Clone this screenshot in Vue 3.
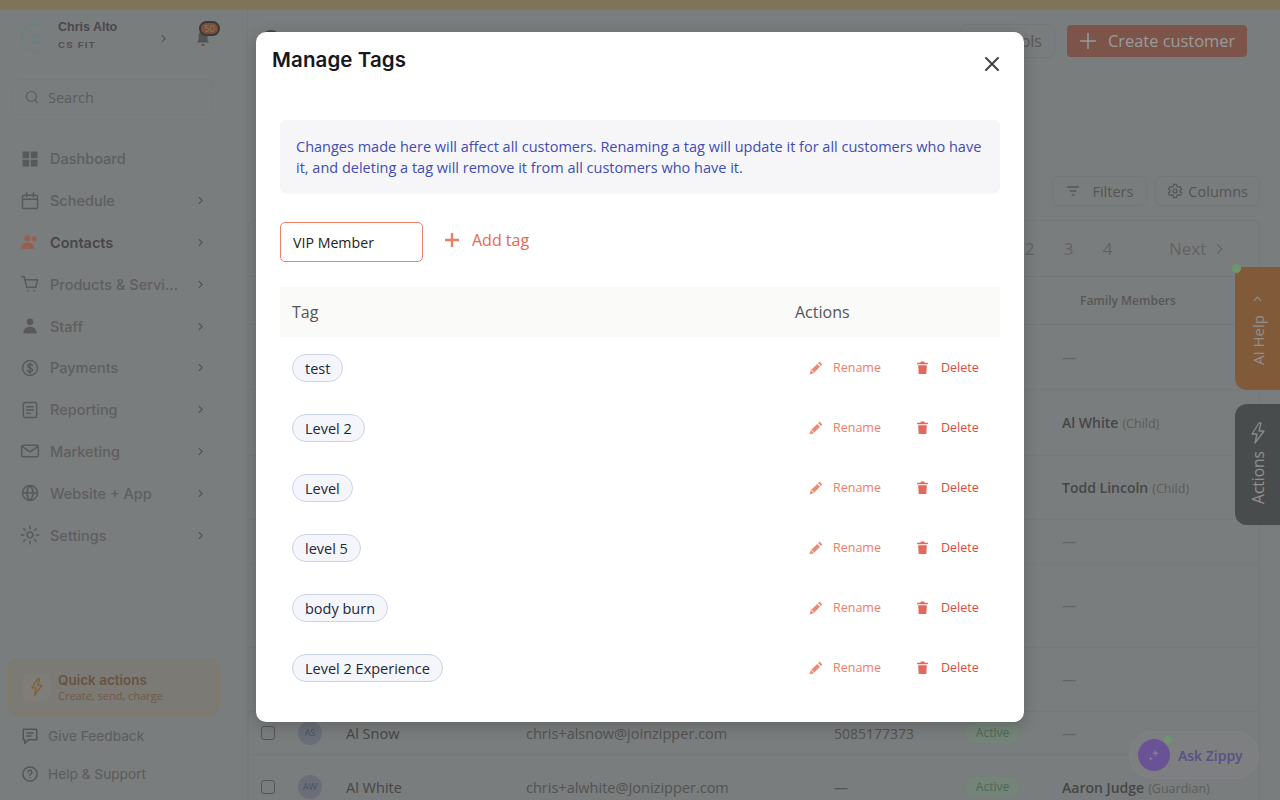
<script setup>
const navItems = [
  { label: 'Dashboard', icon: 'M3 3h8v8H3zM13 3h8v8h-8zM3 13h8v8H3zM13 13h8v8h-8z', solid: true },
  { label: 'Schedule', icon: 'M5 5h14a2 2 0 0 1 2 2v13a1 1 0 0 1-1 1H4a1 1 0 0 1-1-1V7a2 2 0 0 1 2-2zM3 10h18M8 2.5V7M16 2.5V7', arrow: true },
  { label: 'Contacts', icon: 'M9 4a3.6 3.6 0 1 1 0 7.2A3.6 3.6 0 0 1 9 4zM17 5a3 3 0 1 1 0 6 3 3 0 0 1 0-6zM1 20c0-5 3.5-7.5 8-7.5s8 2.5 8 7.5z', solid: true, active: true, arrow: true },
  { label: 'Products & Servi...', icon: 'M2 3h3l3 13h11l2-9H6.2M9 20.5h.5M17 20.5h.5', arrow: true },
  { label: 'Staff', icon: 'M12 3a4 4 0 1 1 0 8 4 4 0 0 1 0-8zM4 21c0-5 3.5-8 8-8s8 3 8 8z', solid: true, arrow: true },
  { label: 'Payments', icon: 'M12 3a9 9 0 1 1 0 18 9 9 0 0 1 0-18zM15 9c-.5-1-1.500-1.500-3-1.500-2 0-3 1-3 2.200 0 3 6 1.500 6 4.500 0 1.300-1 2.300-3 2.300-1.500 0-2.700-.6-3.200-1.700M12 6v12', arrow: true },
  { label: 'Reporting', icon: 'M6 3h12a2 2 0 0 1 2 2v14a2 2 0 0 1-2 2H6a2 2 0 0 1-2-2V5a2 2 0 0 1 2-2zM8 8h8M8 12h8M8 16h4', arrow: true },
  { label: 'Marketing', icon: 'M4 5h16a2 2 0 0 1 2 2v10a2 2 0 0 1-2 2H4a2 2 0 0 1-2-2V7a2 2 0 0 1 2-2zM2.500 6.500 12 13l9.500-6.500', arrow: true },
  { label: 'Website + App', icon: 'M12 3a9 9 0 1 1 0 18 9 9 0 0 1 0-18zM3 12h18M12 3c-5 5-5 13 0 18M12 3c5 5 5 13 0 18', arrow: true },
  { label: 'Settings', icon: 'M12 8.500a3.500 3.500 0 1 1 0 7 3.500 3.500 0 0 1 0-7zM12 1.500v3M12 19.500v3M1.500 12h3M19.500 12h3M4.500 4.500l2 2M17.500 17.500l2 2M4.500 19.500l2-2M17.500 6.500l2-2', arrow: true }
];

const rows = [
  { height: 65, family: '—' },
  { height: 66, family: 'Al White', relation: '(Child)' },
  { height: 64, family: 'Todd Lincoln', relation: '(Child)' },
  { height: 44, family: '—' },
  { height: 84, family: '—' },
  { height: 64, family: '—' },
  { height: 43, initials: 'AS', name: 'Al Snow', email: 'chris+alsnow@joinzipper.com', phone: '5085177373', family: '—' },
  { height: 65, initials: 'AW', name: 'Al White', email: 'chris+alwhite@Jonizipper.com', phone: '—', family: 'Aaron Judge', relation: '(Guardian)' }
];

const tags = ['test', 'Level 2', 'Level', 'level 5', 'body burn', 'Level 2 Experience'];
</script>

<template>
  <div class="page">
    <div class="promo-bar"></div>
    <div class="shell">
      <aside class="sidebar">
        <div class="account">
          <svg class="logo" viewBox="0 0 32 32" fill="none" stroke="#a9d8d8" stroke-width="1.300">
            <path d="M22 2.500A14.500 14.500 0 1 0 22 29.500" />
            <path d="M26 13h-8a4 4 0 0 0 0 8h9" />
          </svg>
          <div class="account-text">
            <div class="account-name">Chris Alto</div>
            <div class="account-org">CS FIT</div>
          </div>
          <svg class="chev account-chev" viewBox="0 0 6 10" fill="none" stroke="currentColor" stroke-width="1.400"><path d="m1 1 4 4-4 4" /></svg>
          <div class="bell">
            <svg viewBox="0 0 24 24" width="18" height="18" fill="#8a8a8a">
              <path d="M12 3c4 0 6 3 6 7v5l2 3H4l2-3v-5c0-4 2-7 6-7zM9.500 20h5a2.500 2.500 0 0 1-5 0z" />
            </svg>
            <span class="bell-count">50</span>
          </div>
        </div>
        <div class="search">
          <svg viewBox="0 0 24 24" width="14" height="14" fill="none" stroke="#999" stroke-width="2">
            <circle cx="11" cy="11" r="8.500" /><path d="m17 17 5 5" />
          </svg>
          <span>Search</span>
        </div>
        <nav class="nav">
          <div v-for="item in navItems" :key="item.label" class="nav-item" :class="{ active: item.active }">
            <svg class="nav-icon" viewBox="0 0 24 24" :fill="item.solid ? 'currentColor' : 'none'" :stroke="item.solid ? 'none' : 'currentColor'" stroke-width="1.800" stroke-linecap="round" stroke-linejoin="round">
              <path :d="item.icon" />
            </svg>
            <span class="nav-label">{{ item.label }}</span>
            <svg v-if="item.arrow" class="chev" viewBox="0 0 6 10" fill="none" stroke="currentColor" stroke-width="1.400"><path d="m1 1 4 4-4 4" /></svg>
          </div>
        </nav>
        <div class="sidebar-foot">
          <div class="quick">
            <div class="quick-icon">
              <svg viewBox="0 0 24 24" width="20" height="20" fill="none" stroke="#e0a050" stroke-width="1.700" stroke-linejoin="round">
                <path d="M13 2 6 13h5l-2 9 9-12h-5l2-8z" />
              </svg>
            </div>
            <div>
              <div class="quick-title">Quick actions</div>
              <div class="quick-sub">Create, send, charge</div>
            </div>
          </div>
          <div class="foot-link">
            <svg viewBox="0 0 24 24" width="18" height="18" fill="none" stroke="#8e8e8e" stroke-width="2" stroke-linejoin="round">
              <path d="M3 3h18v14H10l-5 5v-5H3zM7 8h10M7 12h7" />
            </svg>
            <span>Give Feedback</span>
          </div>
          <div class="foot-link">
            <svg viewBox="0 0 24 24" width="18" height="18" fill="none" stroke="#8e8e8e" stroke-width="2" stroke-linecap="round">
              <circle cx="12" cy="12" r="9.500" /><path d="M9.500 9.500a2.500 2.500 0 1 1 3.500 2.300c-.7.3-1 .8-1 1.700M12 17h.01" />
            </svg>
            <span>Help &amp; Support</span>
          </div>
        </div>
      </aside>

      <main class="main">
        <div class="main-head">
          <span class="title-icon"></span>
          <button class="tools-btn">Tools</button>
          <button class="create-btn">
            <svg viewBox="0 0 16 16" width="16" height="16" fill="none" stroke="#fff" stroke-width="1.500"><path d="M8 0v16M0 8h16" /></svg>
            Create customer
          </button>
        </div>
        <div class="tabs-line"></div>
        <div class="toolbar">
          <button class="tool-btn">
            <svg viewBox="0 0 24 24" width="16" height="16" fill="none" stroke="#8e8e8e" stroke-width="2"><path d="M3 6h18M7 12h10M10 18h4" /></svg>
            <span class="filters-label">Filters</span>
          </button>
          <button class="tool-btn">
            <svg viewBox="0 0 24 24" width="16" height="16" fill="none" stroke="#8e8e8e" stroke-width="1.800"><circle cx="12" cy="12" r="3" /><path d="m10 2-.6 3-2.600 1.500-3-1L2 9l2.300 2v2L2 15l1.800 3.500 3-1L9.400 19l.6 3h4l.6-3 2.600-1.500 3 1L22 15l-2.300-2v-2L22 9l-1.800-3.500-3 1L14.600 5 14 2z" /></svg>
            Columns
          </button>
        </div>
        <div class="table-card">
          <div class="pager">
            <span class="pg">2</span><span class="pg">3</span><span class="pg">4</span>
            <span class="pg-next">Next
              <svg viewBox="0 0 6 10" width="7" height="12" fill="none" stroke="currentColor" stroke-width="1"><path d="m1 1 4 4-4 4" /></svg>
            </span>
          </div>
          <div class="thead"><span class="family-head">Family Members</span></div>
          <div v-for="(row, i) in rows" :key="i" class="trow" :style="{ height: row.height + 'px' }">
            <template v-if="row.name">
              <span class="check"></span>
              <span class="avatar">{{ row.initials }}</span>
              <span class="cell-name">{{ row.name }}</span>
              <span class="cell-email">{{ row.email }}</span>
              <span class="cell-phone">{{ row.phone }}</span>
              <span class="cell-status">Active</span>
            </template>
            <span class="cell-family">
              <span :class="{ dash: row.family === '—' }">{{ row.family }}</span>
              <span v-if="row.relation" class="relation">{{ row.relation }}</span>
            </span>
          </div>
        </div>
      </main>
    </div>

    <div class="side-tab help-tab">
      <svg viewBox="0 0 10 6" width="9" height="6" fill="none" stroke="#eee" stroke-width="1.300"><path d="m1 5 4-4 4 4" /></svg>
      <span class="tab-text">AI Help</span>
    </div>
    <span class="help-dot"></span>
    <div class="side-tab actions-tab">
      <svg viewBox="0 0 24 24" width="24" height="24" fill="none" stroke="#e4e8e8" stroke-width="1.300" stroke-linejoin="round">
        <path d="M13 2 6 13h5l-2 9 9-12h-5l2-8z" />
      </svg>
      <span class="tab-text">Actions</span>
    </div>
    <div class="zippy">
      <span class="zippy-icon">
        <svg viewBox="0 0 24 24" width="16" height="16" fill="#d8cdf8"><path d="m14 4 1.500 4 4 1.500-4 1.500-1.500 4-1.500-4-4-1.500 4-1.500zM7 14l1 2.500 2.500 1L8 18.500 7 21l-1-2.500-2.500-1 2.500-1z" /></svg>
        <span class="zippy-dot"></span>
      </span>
      Ask Zippy
    </div>

    <div class="overlay">
      <section class="modal">
        <header class="modal-head">
          <h2>Manage Tags</h2>
          <svg class="close" viewBox="0 0 24 24" width="24" height="24" fill="none" stroke="#444" stroke-width="2" stroke-linecap="round">
            <path d="m6 6 12 12M18 6 6 18" />
          </svg>
        </header>
        <div class="modal-body">
          <p class="notice">Changes made here will affect all customers. Renaming a tag will update it for all customers who have it, and deleting a tag will remove it from all customers who have it.</p>
          <div class="add-row">
            <input class="tag-input" type="text" value="VIP Member">
            <button class="add-btn">
              <svg viewBox="0 0 16 16" width="16" height="16" fill="none" stroke="#ec7f66" stroke-width="2.400"><path d="M8 1v14M1 8h14" /></svg>
              Add tag
            </button>
          </div>
          <div class="tags-head">
            <span class="col-tag">Tag</span>
            <span class="col-actions">Actions</span>
          </div>
          <div v-for="tag in tags" :key="tag" class="tag-row">
            <span class="col-tag"><span class="pill">{{ tag }}</span></span>
            <span class="rename">
              <svg viewBox="0 0 24 24" width="14" height="14" fill="#f08a78">
                <path d="M18 1l5 5-2.500 2.500-5-5zM14 5l5 5L8 21 1 23l2-7z" />
                <path d="m4 15.500 5 5" stroke="#fff" stroke-width="1.500" />
              </svg>
              Rename
            </span>
            <span class="delete">
              <svg viewBox="0 0 24 24" width="13" height="13" fill="#e26a5c"><path d="M9 1h6l1 2h6v3H2V3h6zM4 8h16l-1 16H5z" /></svg>
              Delete
            </span>
          </div>
        </div>
      </section>
    </div>
  </div>
</template>

<style scoped>
.page {
  position: relative;
  width: 1280px;
  height: 800px;
  overflow: hidden;
  background: #cbd0d0;
  font-family: "Open Sans", sans-serif;
}
.promo-bar {
  height: 10px;
  background: #d4c093;
}
.shell {
  display: flex;
  height: 790px;
}
.sidebar {
  width: 248px;
  flex: none;
  display: flex;
  flex-direction: column;
  border-right: 1px solid #c4c8c8;
  box-sizing: border-box;
  font-family: Inter, sans-serif;
}
.account {
  display: flex;
  align-items: center;
  padding: 8px 0 0 19px;
  height: 40px;
}
.logo {
  width: 30px;
  height: 30px;
  flex: none;
}
.account-text {
  margin: 0 0 6px 9px;
  width: 101px;
}
.account-name {
  font-family: "Liberation Sans", sans-serif;
  font-size: 12.500px;
  font-weight: 700;
  color: #7b7b7b;
}
.account-org {
  font-family: "Liberation Sans", sans-serif;
  font-size: 9.500px;
  font-weight: 700;
  letter-spacing: 1.300px;
  color: #858585;
  margin-top: 5px;
}
.chev {
  width: 5px;
  height: 9px;
  flex: none;
  color: #8a8a8a;
}
.account-chev {
  margin: 0 28px 0 2px;
}
.bell {
  position: relative;
  height: 18px;
}
.bell-count {
  position: absolute;
  top: -8px;
  left: 5px;
  width: 17px;
  height: 11px;
  border: 2px solid #5f6262;
  border-radius: 8px;
  background: #d0845a;
  color: #d8c0b0;
  font-size: 9px;
  line-height: 11px;
  text-align: center;
}
.search {
  display: flex;
  align-items: center;
  gap: 9px;
  margin: 21px 34px 0 12px;
  height: 34px;
  padding-left: 12px;
  border: 1px solid #c8cccc;
  border-radius: 6px;
  font-family: "Open Sans", sans-serif;
  font-size: 14.500px;
  color: #999;
}
.nav {
  margin-top: 23px;
  padding-left: 20px;
}
.nav-item {
  display: flex;
  align-items: center;
  height: 41.800px;
  color: #949494;
}
.nav-item.active {
  color: #ff9f80;
}
.nav-icon {
  width: 20px;
  height: 20px;
  flex: none;
}
.nav-label {
  width: 139px;
  margin-left: 10px;
  font-size: 14.500px;
  font-weight: 500;
  color: #9e9e9e;
  white-space: nowrap;
}
.active .nav-label {
  font-weight: 600;
  color: #777;
}
.nav-item .chev {
  margin-left: 9px;
  color: #8a8a8a;
}
.sidebar-foot {
  margin-top: auto;
  padding: 0 0 7px 8px;
}
.quick {
  display: flex;
  align-items: center;
  gap: 8px;
  width: 211px;
  height: 56px;
  padding-left: 14px;
  box-sizing: border-box;
  margin-bottom: 2px;
  border: 1px solid #d9c9a6;
  border-radius: 8px;
  background: #cdcbc2;
}
.quick-icon {
  width: 27px;
  height: 27px;
  display: flex;
  align-items: center;
  justify-content: center;
  border-radius: 5px;
  background: #d0d0ca;
}
.quick-title {
  font-size: 13.500px;
  font-weight: 600;
  color: #b08a72;
}
.quick-sub {
  font-family: "Open Sans", sans-serif;
  font-size: 11px;
  color: #c09478;
}
.foot-link {
  display: flex;
  align-items: center;
  gap: 9px;
  height: 38px;
  padding-left: 13px;
  font-size: 13.700px;
  color: #9a9a9a;
}
.main {
  flex: 1;
  display: flex;
  flex-direction: column;
  min-width: 0;
}
.main-head {
  display: flex;
  align-items: center;
  gap: 12px;
  height: 31px;
  margin-top: 15px;
  padding: 0 33px 0 13px;
}
.title-icon {
  width: 20px;
  height: 22px;
  margin-right: auto;
  border-radius: 50%;
  background: #777;
}
.tools-btn {
  width: 95px;
  height: 34px;
  border: 1px solid #c4c8c8;
  border-radius: 8px;
  background: transparent;
  font: 16px "Open Sans", sans-serif;
  color: #929292;
  text-align: right;
  padding: 0 12px;
}
.create-btn {
  display: flex;
  align-items: center;
  gap: 12px;
  width: 180px;
  height: 32px;
  border: 0;
  border-radius: 4px;
  background: #d08c7a;
  font: 16.400px "Open Sans", sans-serif;
  color: #fff;
  padding: 0 0 0 13px;
}
.tabs-line {
  height: 1px;
  margin: 96px 20px 0 0;
  background: #c2c6c6;
}
.toolbar {
  display: flex;
  justify-content: flex-end;
  gap: 8px;
  margin-top: 24px;
  padding-right: 20px;
}
.tool-btn {
  display: flex;
  align-items: center;
  gap: 5px;
  height: 30px;
  padding: 0 12px;
  border: 1px solid #c4c8c8;
  border-radius: 6px;
  background: transparent;
  font: 14.500px "Open Sans", sans-serif;
  color: #8e8e8e;
}
.tool-btn:last-child {
  padding: 0 11px;
}
.filters-label {
  margin-left: 6px;
  margin-right: 1px;
}
.table-card {
  margin: 14px 20px 0 0;
  border: 1px solid #c4c8c8;
  border-bottom: 0;
  border-radius: 6px 6px 0 0;
}
.pager {
  display: flex;
  align-items: center;
  height: 55px;
  padding-left: 761px;
  font-size: 17px;
  color: #a4a4a4;
}
.pg {
  width: 39px;
  text-align: center;
}
.pg-next {
  display: flex;
  align-items: center;
  gap: 10px;
  margin-left: 42px;
}
.thead {
  height: 49px;
  display: flex;
  align-items: center;
  border-top: 1px solid #c2c6c6;
  border-bottom: 1px solid #c2c6c6;
  box-sizing: border-box;
  font-size: 12px;
  font-weight: 600;
  color: #929292;
}
.family-head {
  margin-left: 831px;
}
.trow {
  position: relative;
  display: flex;
  align-items: center;
  box-sizing: border-box;
  border-bottom: 1px solid #c6caca;
  font-size: 14.500px;
  color: #7d7d7d;
}
.check {
  width: 12px;
  height: 12px;
  margin-left: 12px;
  border: 1px solid #8e8e8e;
  border-radius: 3px;
}
.avatar {
  width: 24px;
  height: 24px;
  margin-left: 23px;
  border-radius: 50%;
  background: #b0b8c8;
  font-size: 9px;
  line-height: 24px;
  text-align: center;
  color: #7e8aa0;
}
.cell-name {
  width: 180px;
  margin-left: 24px;
  color: #757575;
}
.cell-email {
  width: 308px;
  color: #8a8a8a;
}
.cell-phone {
  width: 130px;
  font-size: 14px;
  color: #8a8a8a;
}
.cell-status {
  width: 57px;
  height: 22px;
  margin-right: 41px;
  border: 1px solid #bcd8c4;
  border-radius: 11px;
  background: #c4dcc8;
  font-size: 12px;
  line-height: 20px;
  text-align: center;
  color: #7eb08e;
  box-sizing: border-box;
}
.cell-family {
  position: absolute;
  left: 813px;
  white-space: nowrap;
  font-size: 14px;
  font-weight: 600;
  color: #757575;
}
.dash {
  font-weight: 400;
  color: #a8a8a8;
}
.relation {
  margin-left: 4px;
  font-size: 12.500px;
  font-weight: 400;
  color: #9a9a9a;
}
.side-tab {
  position: absolute;
  left: 1235px;
  width: 45px;
  display: flex;
  flex-direction: column;
  align-items: center;
  box-sizing: border-box;
  border-radius: 12px 0 0 12px;
  color: #eee;
}
.help-tab {
  top: 267px;
  height: 123px;
  background: #d8965f;
  padding-top: 29px;
  gap: 13px;
  border-top-left-radius: 8px;
  font-size: 15px;
}
.actions-tab {
  top: 404px;
  height: 121px;
  background: #7b7f7f;
  padding-top: 17px;
  gap: 6px;
  font-size: 15.500px;
}
.tab-text {
  writing-mode: vertical-rl;
  transform: rotate(180deg);
}
.help-dot {
  position: absolute;
  left: 1232px;
  top: 264px;
  width: 9px;
  height: 9px;
  border-radius: 50%;
  background: #b7fab7;
}
.zippy {
  position: absolute;
  left: 1129px;
  top: 731px;
  width: 130px;
  height: 48px;
  display: flex;
  align-items: center;
  gap: 8px;
  padding-left: 8px;
  box-sizing: border-box;
  border: 1px solid #d8d8ec;
  border-radius: 24px;
  background: #d2d4d8;
  font-size: 14px;
  font-weight: 600;
  color: #9684e3;
}
.zippy-icon {
  position: relative;
  width: 32px;
  height: 32px;
  display: flex;
  align-items: center;
  justify-content: center;
  border-radius: 50%;
  background: #b089fa;
}
.zippy-dot {
  position: absolute;
  top: -3px;
  right: -2px;
  width: 8px;
  height: 8px;
  border-radius: 50%;
  background: #b7fab7;
}
.overlay {
  position: absolute;
  inset: 0;
  display: flex;
  justify-content: center;
  align-items: flex-start;
  padding-top: 32px;
  background: rgba(0, 0, 0, .4);
}
.modal {
  width: 768px;
  height: 690px;
  border-radius: 10px;
  background: #fff;
  box-shadow: 0 4px 16px rgba(0, 0, 0, .2);
}
.modal-head {
  display: flex;
  justify-content: space-between;
  align-items: flex-start;
  height: 88px;
  padding: 14px 20px 0 16px;
  box-sizing: border-box;
}
.modal-head h2 {
  margin: 0;
  font-family: Inter, sans-serif;
  font-size: 20.500px;
  font-weight: 600;
  line-height: 28px;
  letter-spacing: .1px;
  color: #16181d;
}
.close {
  margin-top: 6px;
}
.modal-body {
  padding: 0 24px;
}
.notice {
  margin: 0;
  padding: 16px;
  height: 74px;
  box-sizing: border-box;
  border-radius: 6px;
  background: #f6f6f9;
  font-size: 14.500px;
  line-height: 21px;
  color: #3f4db0;
}
.add-row {
  display: flex;
  align-items: center;
  gap: 21px;
  margin-top: 28px;
}
.tag-input {
  width: 143px;
  height: 40px;
  box-sizing: border-box;
  padding: 0 12px;
  border: 1px solid #ee8167;
  border-radius: 5px;
  outline: none;
  font: 14.200px "Open Sans", sans-serif;
  color: #222;
}
.add-btn {
  display: flex;
  align-items: center;
  gap: 12px;
  padding: 0;
  border: 0;
  background: none;
  font: 16px "Open Sans", sans-serif;
  color: #e9674c;
  margin-top: -4px;
}
.tags-head {
  display: flex;
  align-items: center;
  height: 50px;
  margin-top: 25px;
  background: #fafaf8;
  font-size: 16px;
  color: #555;
}
.col-tag {
  width: 515px;
  padding-left: 12px;
  box-sizing: border-box;
}
.tag-row {
  display: flex;
  align-items: center;
  height: 60px;
}
.tags-head + .tag-row {
  margin-top: 1px;
}
.pill {
  display: inline-block;
  padding: 0 12px;
  height: 26px;
  border: 1px solid #ccd3e6;
  border-radius: 14px;
  background: #f5f6fb;
  font-size: 14.500px;
  line-height: 27px;
  color: #222838;
}
.rename,
.delete {
  display: flex;
  align-items: center;
  font-size: 12.500px;
  font-weight: 500;
  margin-top: -1px;
}
.rename {
  width: 107px;
  gap: 10px;
  margin-left: 14px;
  color: #ee7d66;
}
.delete {
  gap: 12px;
  color: #de4a38;
}
</style>
